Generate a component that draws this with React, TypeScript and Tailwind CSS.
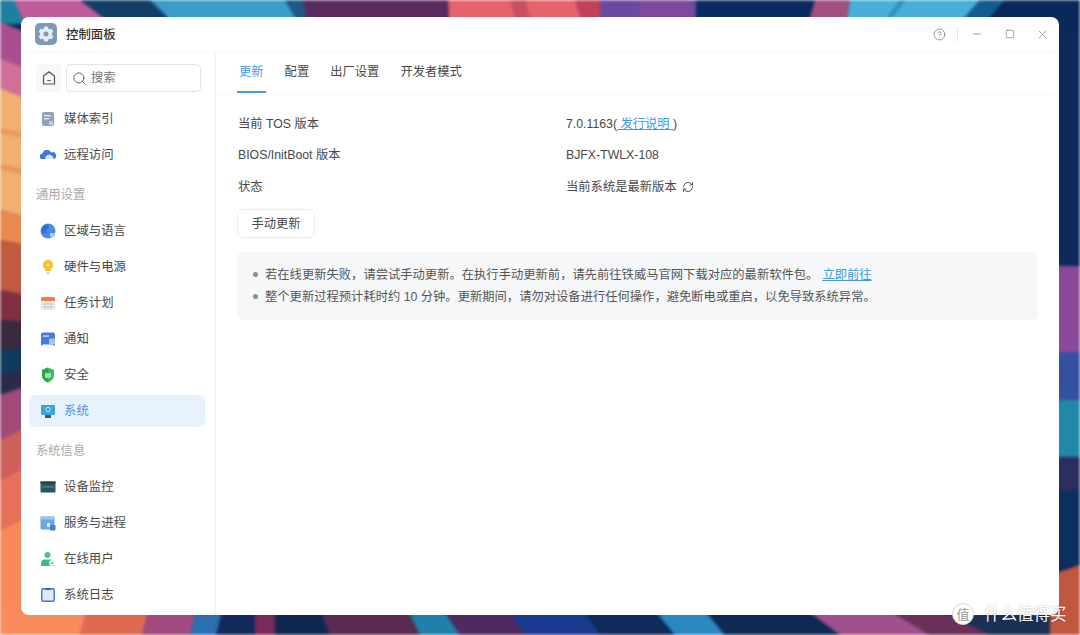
import { HelpCircle, Minus, RefreshCw, Search, Square, X } from 'lucide-react';
import type { ReactNode } from 'react';

const font = 'font-["Liberation_Sans","Noto_Sans_CJK_SC",sans-serif]';

const Wallpaper = () => (
  <svg className="absolute inset-0 blur-[1.5px]" width="1080" height="635" viewBox="0 0 1080 635">
    <rect width="1080" height="635" fill="#0c2a5c" />
    {/* top edge */}
    <polygon points="0,0 14,0 30,24 0,24" fill="#1f7f9f" />
    <polygon points="14,0 80,0 125,34 30,34" fill="#c05a98" />
    <polygon points="80,0 150,0 185,34 125,34" fill="#123f68" />
    <polygon points="150,0 285,0 305,34 185,34" fill="#3c9cc8" />
    <polygon points="285,0 303,0 315,34 305,34" fill="#1d5a85" />
    <polygon points="303,0 448,0 450,34 310,34" fill="#5a2a5e" />
    <polygon points="448,0 600,0 600,34 450,34" fill="#e8626c" />
    <polygon points="510,0 525,0 535,34 520,34" fill="#c84e60" />
    <polygon points="575,0 600,0 600,34 585,34" fill="#c24058" />
    <polygon points="600,0 696,0 698,34 600,34" fill="#6a4aa0" />
    <polygon points="640,0 690,0 696,34 640,34" fill="#80489c" />
    <rect x="696" y="0" width="110" height="34" fill="#0b2a62" />
    <polygon points="815,0 850,0 845,34 805,34" fill="#a04f80" />
    <polygon points="850,0 980,0 950,34 845,34" fill="#48b0d8" />
    <polygon points="900,0 906,0 880,34 874,34" fill="#2f8fbd" />
    <polygon points="980,0 1005,0 975,34 950,34" fill="#155a90" />
    <polygon points="1005,0 1080,0 1080,34 975,34" fill="#0a2858" />
    {/* left edge */}
    <polygon points="0,22 30,34 30,70 0,58" fill="#a8508f" />
    <polygon points="0,58 30,70 30,100 0,88" fill="#d0709a" />
    <polygon points="0,88 30,100 30,218 0,210" fill="#f0b072" />
    <polygon points="0,128 30,134 30,139 0,133" fill="#e8985c" />
    <polygon points="0,164 30,170 30,176 0,170" fill="#e8985c" />
    <polygon points="0,210 30,218 30,246 0,240" fill="#e88a50" />
    <polygon points="0,240 30,246 30,296 0,290" fill="#c05a40" />
    <polygon points="0,290 30,296 30,322 0,320" fill="#803040" />
    <polygon points="0,320 30,322 30,348 0,350" fill="#3a2a40" />
    <polygon points="0,350 30,348 30,370 0,375" fill="#103a60" />
    <polygon points="0,375 30,370 30,385 0,395" fill="#2a2a4a" />
    <polygon points="0,395 30,385 30,425 0,440" fill="#a04a78" />
    <polygon points="0,440 30,425 30,465 0,480" fill="#d0605a" />
    <polygon points="0,480 30,465 30,515 0,530" fill="#e8705a" />
    <polygon points="0,530 30,515 30,635 0,635" fill="#f88a5a" />
    {/* bottom edge */}
    <polygon points="0,605 88,605 80,635 0,635" fill="#f98a5c" />
    <polygon points="88,605 150,605 142,635 80,635" fill="#e06a50" />
    <polygon points="150,605 198,605 190,635 142,635" fill="#a04a80" />
    <polygon points="198,605 224,605 216,635 190,635" fill="#2a70b0" />
    <polygon points="224,605 258,605 252,635 216,635" fill="#122a58" />
    <rect x="255" y="605" width="20" height="30" fill="#7a2a5a" />
    <rect x="275" y="605" width="48" height="30" fill="#10284f" />
    <polygon points="318,605 405,605 420,635 330,635" fill="#5a2a50" />
    <polygon points="405,605 440,605 460,635 420,635" fill="#2080a8" />
    <polygon points="440,605 505,605 525,635 460,635" fill="#4f2a60" />
    <polygon points="505,605 580,605 600,635 525,635" fill="#1a3a90" />
    <polygon points="580,605 650,605 675,635 600,635" fill="#0f2a5c" />
    <polygon points="650,605 700,605 725,635 675,635" fill="#2a88c0" />
    <polygon points="700,605 800,605 840,635 725,635" fill="#0e2a52" />
    <polygon points="800,605 880,605 930,635 840,635" fill="#a0508f" />
    <polygon points="880,605 930,605 990,635 930,635" fill="#6a3058" />
    <polygon points="930,605 1050,605 1080,635 990,635" fill="#1c2f55" />
    {/* right edge */}
    <rect x="1050" y="266" width="30" height="86" fill="#8a4a98" />
    <rect x="1050" y="352" width="30" height="48" fill="#34509f" />
    <rect x="1050" y="400" width="30" height="57" fill="#2088a8" />
    <rect x="1050" y="457" width="30" height="33" fill="#2a2f5f" />
    <rect x="1050" y="490" width="30" height="75" fill="#0d2f60" />
    <polygon points="1050,575 1080,565 1080,635 1050,635" fill="#c0583f" />
  </svg>
);

const Icon = ({ children }: { children: ReactNode }) => (
  <svg width="16" height="16" viewBox="0 0 16 16" className="shrink-0">
    {children}
  </svg>
);

const icons: Record<string, ReactNode> = {
  media: (
    <Icon>
      <rect x="2" y="1" width="12" height="14" rx="2" fill="#8ea3b5" />
      <rect x="4" y="4" width="7" height="1.3" fill="#e8edf2" />
      <rect x="4" y="7" width="5" height="1.3" fill="#e8edf2" />
      <rect x="9" y="10" width="4" height="4" rx="1" fill="#c3d0db" />
    </Icon>
  ),
  remote: (
    <Icon>
      <path d="M1 12a3 3 0 0 1 1.5-5.5A4.5 4.5 0 0 1 11 5.5a3.5 3.5 0 0 1 3 6.5z" fill="#3b78e0" />
      <path d="M6 12a2 2 0 0 1 1-3.500a3 3 0 0 1 5 .5 2 2 0 0 1 1 3z" fill="#d6e6fb" />
    </Icon>
  ),
  region: (
    <Icon>
      <circle cx="8" cy="8" r="7.500" fill="#4a8be8" />
      <path d="M2 5c2-3 5-4 7-3 0 3-3 6-5 9-2-1-3-4-2-6z" fill="#2f6fd0" />
      <rect x="10" y="10" width="5" height="4" rx="1" fill="#a8cbf6" />
    </Icon>
  ),
  hardware: (
    <Icon>
      <path d="M8 1a5 5 0 0 1 3 9l-.5 2h-5L5 10a5 5 0 0 1 3-9z" fill="#f5c02e" />
      <rect x="6" y="13" width="4" height="2" rx="1" fill="#d8d8d0" />
      <circle cx="8" cy="6" r="1.500" fill="#fbe28c" />
    </Icon>
  ),
  task: (
    <Icon>
      <rect x="1" y="2" width="14" height="13" rx="1.500" fill="#ece7e1" />
      <path d="M1 6V3.500A1.500 1.500 0 0 1 2.500 2h11A1.500 1.500 0 0 1 15 3.500V6z" fill="#ef7f4f" />
      <g fill="#cfc8c0">
        <rect x="4" y="8" width="2" height="2" />
        <rect x="7" y="8" width="2" height="2" />
        <rect x="10" y="8" width="2" height="2" />
        <rect x="4" y="11" width="2" height="2" />
        <rect x="7" y="11" width="2" height="2" />
        <rect x="10" y="11" width="2" height="2" />
      </g>
    </Icon>
  ),
  notice: (
    <Icon>
      <path d="M3 1.500h10A2 2 0 0 1 15 3.500V15l-3-1.500H3L1 15V3.500A2 2 0 0 1 3 1.500z" fill="#4a78e0" />
      <rect x="3" y="4.500" width="6" height="1.200" fill="#dfe9fb" />
      <rect x="9" y="7.500" width="6" height="6" rx="1" fill="#a9c3f0" />
    </Icon>
  ),
  security: (
    <Icon>
      <path d="M8 .5l6 2.500v5c0 3.500-2.500 6-6 7.500-3.500-1.500-6-4-6-7.500V3z" fill="#3dba5c" />
      <path d="M8 .5v15c-3.500-1.500-6-4-6-7.500V3z" fill="#2ca34c" />
      <rect x="5" y="6" width="6" height="5" rx="1" fill="#9be0ae" />
    </Icon>
  ),
  system: (
    <Icon>
      <rect x="1" y="2" width="14" height="10" rx="1" fill="#3fa3d8" />
      <rect x="5" y="12" width="6" height="3" fill="#3a5f7a" />
      <circle cx="8" cy="6.500" r="2.200" fill="none" stroke="#c9e7f7" strokeWidth="1" />
    </Icon>
  ),
  monitor: (
    <Icon>
      <rect x="0.500" y="2.500" width="15" height="11" rx="1" fill="#2c5560" />
      <rect x="0.500" y="2.500" width="15" height="2" fill="#1f3f4a" />
      <path d="M2 8h3l1-1 1 1.500 1-1 1 .5h5" stroke="#6fb0a8" strokeWidth="0.700" fill="none" />
    </Icon>
  ),
  service: (
    <Icon>
      <rect x="0.500" y="1.500" width="14" height="13" rx="1.500" fill="#6aa8e0" />
      <rect x="0.500" y="1.500" width="14" height="3" fill="#9cc8ec" />
      <rect x="7" y="8" width="3" height="4" fill="#dcecf8" />
      <rect x="10" y="10" width="5.500" height="5.500" rx="1" fill="#3f84d8" />
    </Icon>
  ),
  users: (
    <Icon>
      <circle cx="7.500" cy="4" r="3" fill="#43c0a8" />
      <path d="M1 15v-2.500A4 4 0 0 1 5 8.500h5a4 4 0 0 1 4 4V15z" fill="#3cb89e" />
      <circle cx="12" cy="12" r="3" fill="#e6f8f2" />
      <path d="M10.500 12l1 1 2-2" stroke="#35b090" strokeWidth="1" fill="none" />
    </Icon>
  ),
  logs: (
    <Icon>
      <rect x="1" y="1" width="14" height="14" rx="2" fill="#3f7fd0" />
      <rect x="2.500" y="2.500" width="11" height="11" rx="1" fill="#dfe9f6" />
      <rect x="5" y="1" width="6" height="2" rx="0.500" fill="#2f6ab8" />
    </Icon>
  ),
};

const SideRow = ({ icon, label, active }: { icon: string; label: string; active?: boolean }) => (
  <div
    className={`flex h-8 items-center gap-2 rounded-md pl-[11px] text-[12.4px] ${
      active ? 'bg-[#e8f2fd] text-[#4f94d8]' : 'text-[#4a4a4a]'
    }`}
  >
    {icons[icon]}
    <span>{label}</span>
  </div>
);

const SideHeader = ({ label }: { label: string }) => (
  <div className="flex h-9 items-center pl-[7px] pt-1 text-[12.3px] text-[#a9a9a9]">{label}</div>
);

const InfoRow = ({ label, children }: { label: string; children: ReactNode }) => (
  <div className="flex h-[31.500px] items-center text-[12.3px] text-[#484848]">
    <div className="w-[329px] pl-px">{label}</div>
    <div className="flex items-center">{children}</div>
  </div>
);

const tabs = ['更新', '配置', '出厂设置', '开发者模式'];

export default function App() {
  return (
    <div className={`relative h-[635px] w-[1080px] overflow-hidden pl-[21px] pt-[17px] ${font}`}>
      <Wallpaper />
      <div className="relative flex h-[598px] w-[1038px] flex-col overflow-hidden rounded-lg bg-white">
        <div className="flex h-[35px] shrink-0 items-center border-b border-[#f6f6f6] pl-[14px] pr-[10px]">
          <svg width="22" height="22" viewBox="0 0 22 22" className="shrink-0">
            <rect width="22" height="22" rx="5" fill="#7d9bb5" />
            <g fill="#e6ecf2">
              <circle cx="11" cy="11" r="6" />
              <rect x="9" y="3.500" width="4" height="15" rx="1" />
              <rect x="9" y="3.500" width="4" height="15" rx="1" transform="rotate(60 11 11)" />
              <rect x="9" y="3.500" width="4" height="15" rx="1" transform="rotate(120 11 11)" />
            </g>
            <circle cx="11" cy="11" r="2.500" fill="#7d9bb5" />
          </svg>
          <span className="ml-[9px] pt-[2px] text-[12.4px] font-medium text-[#333]">控制面板</span>
          <div className="ml-auto flex items-center text-[#808080]">
            <HelpCircle size={13} strokeWidth={1.5} />
            <div className="ml-[11px] mr-[13px] h-[15px] w-px bg-[#e8e8e8]" />
            <Minus size={12} strokeWidth={1.5} />
            <Square size={10} strokeWidth={1.7} className="ml-[22px]" />
            <X size={13} strokeWidth={1.4} className="ml-[21px]" />
          </div>
        </div>

        <div className="flex min-h-0 flex-1">
          <aside className="w-[195px] shrink-0 border-r border-[#f0f0f0] pl-2 pr-[10px] pt-3">
            <div className="mb-[11px] flex gap-1 pl-[7px] pr-[4px]">
              <div className="flex h-7 w-[26px] items-center justify-center rounded bg-[#f7f7f7]">
                <svg width="16" height="16" viewBox="0 0 16 16" fill="none" stroke="#555" strokeWidth="1.200">
                  <path d="M8 1.800l5.500 4.200v8H2.500V6z" strokeLinejoin="round" />
                  <path d="M6.300 10.500h3.400" />
                </svg>
              </div>
              <div className="flex h-7 flex-1 items-center gap-1 rounded border border-[#e4e4e4] pl-[5px] text-[12.300px] text-[#777]">
                <Search size={15} strokeWidth={1.400} className="text-[#555]" />
                <span>搜索</span>
              </div>
            </div>
            <div className="flex flex-col gap-1">
              <SideRow icon="media" label="媒体索引" />
              <SideRow icon="remote" label="远程访问" />
              <SideHeader label="通用设置" />
              <SideRow icon="region" label="区域与语言" />
              <SideRow icon="hardware" label="硬件与电源" />
              <SideRow icon="task" label="任务计划" />
              <SideRow icon="notice" label="通知" />
              <SideRow icon="security" label="安全" />
              <SideRow icon="system" label="系统" active />
              <SideHeader label="系统信息" />
              <SideRow icon="monitor" label="设备监控" />
              <SideRow icon="service" label="服务与进程" />
              <SideRow icon="users" label="在线用户" />
              <SideRow icon="logs" label="系统日志" />
            </div>
          </aside>

          <main className="min-w-0 flex-1">
            <div className="flex h-[43px] gap-[17px] border-b border-[#f6f6f6] pl-[21px]">
              {tabs.map((t, i) => (
                <div
                  key={t}
                  className={`flex h-[41px] items-center border-b-2 px-[2px] pt-[2px] text-[12.300px] ${
                    i === 0 ? 'border-[#4a9ad4] text-[#4a9ad4]' : 'border-transparent text-[#484848]'
                  }`}
                >
                  {t}
                </div>
              ))}
            </div>

            <div className="pl-[21px] pr-[21px] pt-[13px]">
              <InfoRow label="当前 TOS 版本">
                <span>7.0.1163(</span>
                <span className="text-[#3f9ad6] underline">&nbsp;发行说明&nbsp;</span>
                <span>)</span>
              </InfoRow>
              <InfoRow label="BIOS/InitBoot 版本">BJFX-TWLX-108</InfoRow>
              <InfoRow label="状态">
                当前系统是最新版本
                <RefreshCw size={12} strokeWidth={1.800} className="ml-[5px] text-[#444]" />
              </InfoRow>
              <button className="mt-[6px] flex h-[29px] w-[78px] items-center justify-center rounded-md border border-[#ececec] bg-white pt-[2px] text-[12.300px] text-[#484848]">
                手动更新
              </button>
              <div className="mt-[14px] h-[68px] rounded-md bg-[#f5f7f9] pl-[16px] pt-3 text-[12.300px] leading-[22px] text-[#555]">
                <div className="flex items-center gap-[7px]">
                  <div className="h-[5px] w-[5px] rounded-full bg-[#8a8f95]" />
                  <span>
                    若在线更新失败，请尝试手动更新。在执行手动更新前，请先前往铁威马官网下载对应的最新软件包。
                    <a className="ml-1 text-[#3f9ad6] underline">立即前往</a>
                  </span>
                </div>
                <div className="flex items-center gap-[7px]">
                  <div className="h-[5px] w-[5px] rounded-full bg-[#8a8f95]" />
                  <span>整个更新过程预计耗时约 10 分钟。更新期间，请勿对设备进行任何操作，避免断电或重启，以免导致系统异常。</span>
                </div>
              </div>
            </div>
          </main>
        </div>
      </div>

      {/* watermark */}
      <div className="absolute left-[952px] top-[602px] flex items-center gap-[10px]">
        <div className="flex h-[22px] w-[22px] items-center justify-center rounded-full border border-[#d8d8d8] bg-white text-[13px] text-[#9a9a9a]">
          值
        </div>
        <span className="text-[16.500px] text-white [text-shadow:0_0_2px_rgba(0,0,0,0.3)]">什么值得买</span>
      </div>
    </div>
  );
}
